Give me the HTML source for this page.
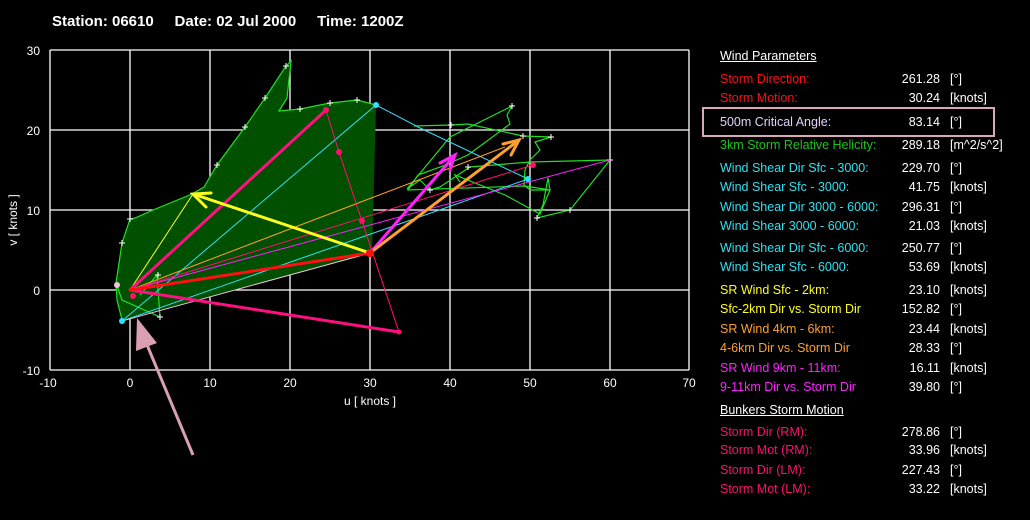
<!DOCTYPE html>
<html><head><meta charset="utf-8"><style>
body{margin:0;background:#000;width:1030px;height:520px;overflow:hidden;font-family:"Liberation Sans",sans-serif;position:relative}
.t{position:absolute;color:#fff;font-size:13px;white-space:nowrap}
.r{position:absolute;left:720px;font-size:12.5px;white-space:nowrap;line-height:15px}
.v{position:absolute;width:220px;text-align:right;left:0;color:#fff}
.u{position:absolute;left:230px;color:#fff}
</style></head><body>
<div class="t" style="left:52px;top:13px;font-weight:bold;font-size:15px">Station: 06610&nbsp;&nbsp;&nbsp;&nbsp;&nbsp;Date: 02 Jul 2000&nbsp;&nbsp;&nbsp;&nbsp;&nbsp;Time: 1200Z</div>
<svg width="1030" height="520" style="position:absolute;left:0;top:0">
<g stroke="#fff" stroke-width="1.3">
<line x1="50" y1="50" x2="689" y2="50"/><line x1="50" y1="130" x2="689" y2="130"/><line x1="50" y1="210" x2="689" y2="210"/><line x1="50" y1="290" x2="689" y2="290"/><line x1="50" y1="370" x2="689" y2="370"/>
<line x1="50" y1="50" x2="50" y2="370"/><line x1="130" y1="50" x2="130" y2="370"/><line x1="210" y1="50" x2="210" y2="370"/><line x1="290" y1="50" x2="290" y2="370"/><line x1="370" y1="50" x2="370" y2="370"/><line x1="450" y1="50" x2="450" y2="370"/><line x1="530" y1="50" x2="530" y2="370"/><line x1="610" y1="50" x2="610" y2="370"/><line x1="689" y1="50" x2="689" y2="370"/>
</g>
<polygon fill="#005000" points="122,320 117,300 116,283 122,243 130,219 135,218 153,210 192,194 204,187 217,165 245,127 265,98 286,66 291,61 287,98 279,111 300,109 330,103 357,100 376,105 374,180 372,252 370,254"/>
<polyline fill="none" stroke="#20e020" stroke-width="1.2" points="122,320 117,300 116,283 122,243 130,219 135,218 153,210 192,194 204,187 217,165 245,127 265,98 286,66 291,61 287,98 279,111 300,109 330,103 357,100 376,105"/>
<polyline fill="none" stroke="#20e020" stroke-width="1.2" points="414,126 451,125 468,124 523,136 551,137 535,142 540,150 530,160 525,170 524,185 530,190 550,190 548,178 543,205 537,218 570,210 610,160 530,162 470,167 440,187 430,190 420,180 407,189 450,137 512,106 507,115 510,124 468,155 443,166 418,175 408,190 525,186 550,190 540,214 505,195 455,175 460,182"/>
<polyline fill="none" stroke="#20e020" stroke-width="1.2" points="116,283 122,300 160,317 157,275 140,295"/>
<g stroke="#fff" stroke-width="1" id="cr">
<path d="M119,243h6M122,240v6M127,219h6M130,216v6M214,165h6M217,162v6M242,127h6M245,124v6M262,98h6M265,95v6M283,66h6M286,63v6M297,109h6M300,106v6M327,103h6M330,100v6M354,100h6M357,97v6M448,125h6M451,122v6M520,136h6M523,133v6M548,137h6M551,134v6M567,210h6M570,207v6M607,160h6M610,157v6M534,218h6M537,215v6M427,190h6M430,187v6M509,106h6M512,103v6M155,275h6M158,272v6M157,317h6M160,314v6M465,167h6M468,164v6"/>
</g>
<g stroke="#30e0ff" stroke-width="1"><line x1="122" y1="321" x2="376" y2="105"/><line x1="122" y1="321" x2="528" y2="179"/><polyline fill="none" points="376,105 420,128 528,179"/></g>
<line x1="122" y1="321" x2="370" y2="253" stroke="#f0c0e0" stroke-width="1"/>
<line x1="130" y1="290" x2="193" y2="194" stroke="#ffff30" stroke-width="1"/>
<line x1="130" y1="290" x2="610" y2="160" stroke="#ff20ff" stroke-width="1"/>
<line x1="130" y1="290" x2="505" y2="147" stroke="#ffa020" stroke-width="1"/>
<line x1="130" y1="290" x2="533" y2="165" stroke="#ff1070" stroke-width="1"/>
<polyline fill="none" stroke="#ff1070" stroke-width="1" points="326,110 339,152 362,221 399,332"/>
<g stroke-width="3" fill="none" stroke-linecap="round">
<line x1="130" y1="290" x2="326" y2="110" stroke="#ff1080"/>
<line x1="130" y1="290" x2="399" y2="332" stroke="#ff1080"/>
<line x1="130" y1="290" x2="370" y2="253" stroke="#ff1010"/>
<polyline points="370,253 193,194" stroke="#ffff20"/><polyline points="211,193 193,194 206,207" stroke="#ffff20"/>
<line x1="370" y1="253" x2="455" y2="155" stroke="#ff20ff"/><polyline points="440,163 455,155 450,170" stroke="#ff20ff"/>
<line x1="370" y1="253" x2="519" y2="140" stroke="#ffa030"/><polyline points="503,144 519,140 511,155" stroke="#ffa030"/>
</g>
<circle cx="370" cy="253" r="4" fill="#ff1010"/><circle cx="326" cy="110" r="3" fill="#ff1070"/><circle cx="339" cy="152" r="3" fill="#ff1070"/><circle cx="362" cy="221" r="3" fill="#ff1070"/><circle cx="399" cy="332" r="2.5" fill="#ff1070"/><circle cx="533" cy="165" r="3" fill="#ff1070"/><circle cx="133" cy="296" r="3" fill="#ff1070"/>
<circle cx="122" cy="321" r="3" fill="#30e0ff"/><circle cx="376" cy="105" r="3" fill="#30e0ff"/><circle cx="528" cy="179" r="3" fill="#30e0ff"/><circle cx="117" cy="285" r="3" fill="#f0c0e0"/>
<line x1="193" y1="455" x2="145" y2="340" stroke="#d8a0b0" stroke-width="3"/>
<polygon points="137,318 157,343 136,351" fill="#d8a0b0"/>
<rect x="703" y="108" width="291" height="28" fill="none" stroke="#d8a8b8" stroke-width="2"/>
<g fill="#fff" font-family="Liberation Sans" font-size="12" text-anchor="end">
<text x="40" y="55">30</text><text x="40" y="135">20</text><text x="40" y="215">10</text><text x="40" y="295">0</text><text x="40" y="375">-10</text>
</g>
<g fill="#fff" font-family="Liberation Sans" font-size="12" text-anchor="middle">
<text x="48" y="387">-10</text><text x="130" y="387">0</text><text x="210" y="387">10</text><text x="290" y="387">20</text><text x="370" y="387">30</text><text x="450" y="387">40</text><text x="530" y="387">50</text><text x="610" y="387">60</text><text x="689" y="387">70</text>
<text x="370" y="405">u  [ knots ]</text>
<text transform="translate(17,220) rotate(-90)">v  [ knots ]</text>
</g>
</svg>
<div class="r" style="top:49px;color:#fff;text-decoration:underline">Wind Parameters</div>
<div class="r" style="top:72px;color:#ff1010">Storm Direction:<span class="v">261.28</span><span class="u">[°]</span></div>
<div class="r" style="top:91px;color:#ff1010">Storm Motion:<span class="v">30.24</span><span class="u">[knots]</span></div>
<div class="r" style="top:115px;color:#e0d0f8">500m Critical Angle:<span class="v">83.14</span><span class="u">[°]</span></div>
<div class="r" style="top:138px;color:#20c020">3km Storm Relative Helicity:<span class="v">289.18</span><span class="u">[m^2/s^2]</span></div>
<div class="r" style="top:161px;color:#30e0f0">Wind Shear Dir Sfc - 3000:<span class="v">229.70</span><span class="u">[°]</span></div>
<div class="r" style="top:180px;color:#30e0f0">Wind Shear Sfc - 3000:<span class="v">41.75</span><span class="u">[knots]</span></div>
<div class="r" style="top:200px;color:#30e0f0">Wind Shear Dir 3000 - 6000:<span class="v">296.31</span><span class="u">[°]</span></div>
<div class="r" style="top:219px;color:#30e0f0">Wind Shear 3000 - 6000:<span class="v">21.03</span><span class="u">[knots]</span></div>
<div class="r" style="top:241px;color:#30e0f0">Wind Shear Dir Sfc - 6000:<span class="v">250.77</span><span class="u">[°]</span></div>
<div class="r" style="top:260px;color:#30e0f0">Wind Shear Sfc - 6000:<span class="v">53.69</span><span class="u">[knots]</span></div>
<div class="r" style="top:283px;color:#ffff20">SR Wind Sfc - 2km:<span class="v">23.10</span><span class="u">[knots]</span></div>
<div class="r" style="top:302px;color:#ffff20">Sfc-2km Dir vs. Storm Dir<span class="v">152.82</span><span class="u">[°]</span></div>
<div class="r" style="top:322px;color:#ffa030">SR Wind 4km - 6km:<span class="v">23.44</span><span class="u">[knots]</span></div>
<div class="r" style="top:341px;color:#ffa030">4-6km Dir vs. Storm Dir<span class="v">28.33</span><span class="u">[°]</span></div>
<div class="r" style="top:361px;color:#ff20ff">SR Wind 9km - 11km:<span class="v">16.11</span><span class="u">[knots]</span></div>
<div class="r" style="top:380px;color:#ff20ff">9-11km Dir vs. Storm Dir<span class="v">39.80</span><span class="u">[°]</span></div>
<div class="r" style="top:403px;color:#fff;text-decoration:underline">Bunkers Storm Motion</div>
<div class="r" style="top:425px;color:#ff1070">Storm Dir (RM):<span class="v">278.86</span><span class="u">[°]</span></div>
<div class="r" style="top:443px;color:#ff1070">Storm Mot (RM):<span class="v">33.96</span><span class="u">[knots]</span></div>
<div class="r" style="top:463px;color:#ff1070">Storm Dir (LM):<span class="v">227.43</span><span class="u">[°]</span></div>
<div class="r" style="top:482px;color:#ff1070">Storm Mot (LM):<span class="v">33.22</span><span class="u">[knots]</span></div>
</body></html>
